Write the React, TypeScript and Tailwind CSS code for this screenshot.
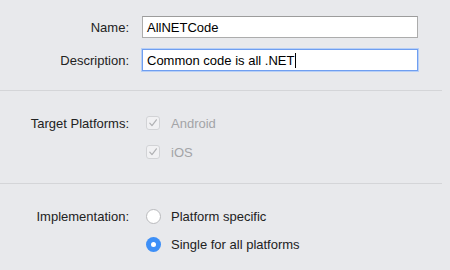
import React from 'react';

function Label({ children }: { children: React.ReactNode }) {
  return <div className="w-[130px] shrink-0 pr-[1px] text-right text-[13px] leading-[15px] text-[#222]">{children}</div>;
}

function Checkbox({ label }: { label: string }) {
  return (
    <div className="flex h-[14px] items-center">
      <span className="flex h-[14px] w-[14px] items-center justify-center rounded-[3px] border border-[#d2d3d6] bg-[#f1f1f3]">
        <svg width="10" height="10" viewBox="0 0 10 10" fill="none">
          <path d="M1.8 5.2 L4 7.6 L8.4 1.8" stroke="#b0b1b4" strokeWidth="1.2" strokeLinecap="round" strokeLinejoin="round" />
        </svg>
      </span>
      <span className="ml-[11px] text-[13px] leading-[15px] text-[#a3a4a7]">{label}</span>
    </div>
  );
}

function Radio({ label, checked }: { label: string; checked?: boolean }) {
  return (
    <div className="flex h-[14px] items-center">
      {checked ? (
        <span className="flex h-[15px] w-[15px] items-center justify-center rounded-full bg-[#3d8ff7]">
          <span className="h-[5px] w-[5px] rounded-full bg-white" />
        </span>
      ) : (
        <span className="h-[15px] w-[15px] rounded-full border border-[#b9babd] bg-white" />
      )}
      <span className="ml-[10px] text-[13px] leading-[15px] text-[#222]">{label}</span>
    </div>
  );
}

export default function App() {
  return (
    <div className="h-[270px] w-[450px] overflow-hidden bg-[#e8e9ec] font-['Liberation_Sans',Arial,sans-serif]">
      <div className="flex flex-col gap-[11px] pt-[16px]">
        <div className="flex h-[22px] items-center">
          <Label>Name:</Label>
          <div className="ml-[12px] flex h-[22px] w-[276px] items-center border border-[#acacac] border-t-[#9c9c9c] bg-white pl-[4px] text-[13px] leading-[15px] text-black">
            AllNETCode
          </div>
        </div>
        <div className="flex h-[22px] items-center">
          <Label>Description:</Label>
          <div className="ml-[12px] flex h-[22px] w-[276px] items-center border border-[#6f9ef0] bg-white pl-[4px] text-[13px] leading-[15px] text-black shadow-[0_0_0_1px_#b7cff6]">
            Common code is all .NET
            <span className="ml-[1px] h-[15px] w-px bg-black" />
          </div>
        </div>
      </div>

      <div className="mr-[8px] mt-[19px] h-px bg-[#d4d5d8]" />

      <div className="flex pt-[25px]">
        <div className="flex h-[14px] items-center">
          <Label>Target Platforms:</Label>
        </div>
        <div className="ml-[16px] flex flex-col gap-[15px]">
          <Checkbox label="Android" />
          <Checkbox label="iOS" />
        </div>
      </div>

      <div className="mr-[8px] mt-[24px] h-px bg-[#d4d5d8]" />

      <div className="flex pt-[25px]">
        <div className="flex h-[14px] items-center">
          <Label>Implementation:</Label>
        </div>
        <div className="ml-[16px] flex flex-col gap-[14px]">
          <Radio label="Platform specific" />
          <Radio label="Single for all platforms" checked />
        </div>
      </div>
    </div>
  );
}
